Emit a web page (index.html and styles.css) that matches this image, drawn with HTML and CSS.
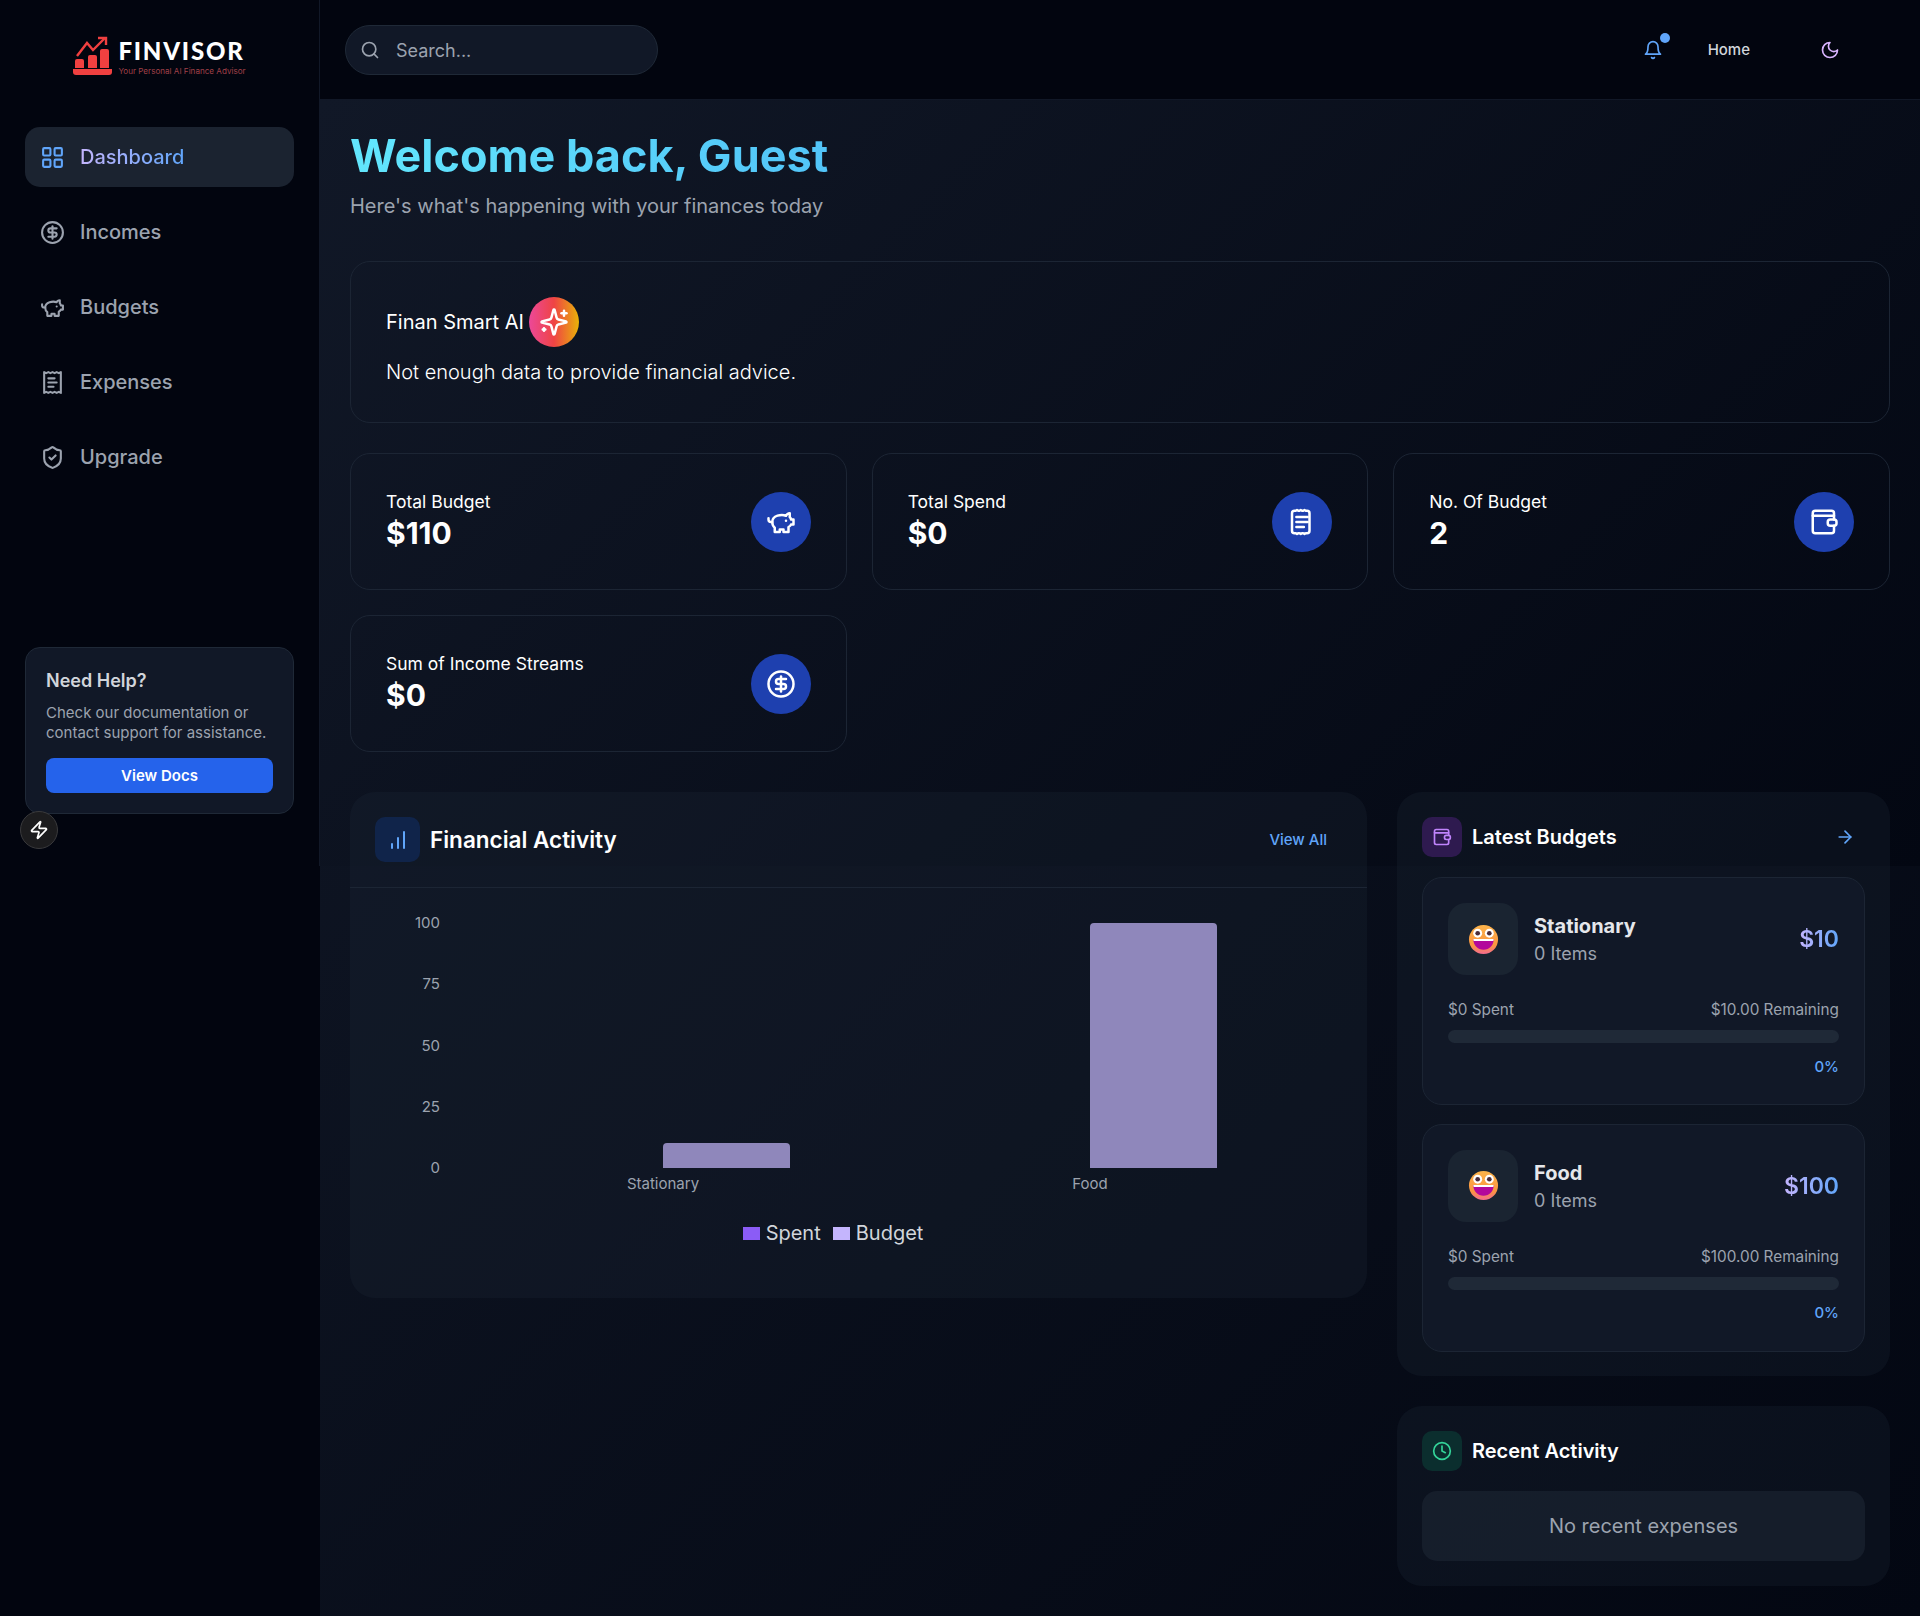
FILE: index.html
```html
<!DOCTYPE html>
<html lang="en">
<head>
    <meta charset="UTF-8">
    <meta name="viewport" content="width=device-width, initial-scale=1.0">
    <title>Finvisor Dashboard</title>
    <link rel="stylesheet" href="styles.css">
</head>
<body>
<svg class="icon-defs" width="0" height="0">
    <defs>
        <linearGradient id="emoji-face" x1="0" y1="0" x2="0" y2="1">
            <stop offset="0" stop-color="#fcb44b"/>
            <stop offset="0.7" stop-color="#fb9540"/>
            <stop offset="1" stop-color="#f46a90"/>
        </linearGradient>
        <symbol id="i-piggy" viewBox="0 0 24 24">
            <path d="M19 5c-1.5 0-2.8 1.4-3 2-3.5-1.5-11-.3-11 5 0 1.8 0 3 2 4.5V20h4v-2h3v2h4v-4c1-.5 1.7-1 2-2h2v-4h-2c0-1-.5-1.5-1-2V5z"/>
            <path d="M2 9v1c0 1.1.9 2 2 2h1"/>
            <path d="M16 11h.01"/>
        </symbol>
        <symbol id="i-receipt" viewBox="0 0 24 24">
            <path d="M4 2v20l2-1 2 1 2-1 2 1 2-1 2 1 2-1 2 1V2l-2 1-2-1-2 1-2-1-2 1-2-1-2 1Z"/>
            <path d="M14 8H8"/>
            <path d="M16 12H8"/>
            <path d="M13 16H8"/>
        </symbol>
        <symbol id="i-ticket" viewBox="0 0 24 24">
            <path d="M6 3h1l1-.6 1 .6h1l1-.6 1 .6h1l1-.6 1 .6h1a2 2 0 0 1 2 2v14a2 2 0 0 1-2 2h-1l-1 .6-1-.6h-1l-1 .6-1-.6h-1l-1 .6-1-.6H6a2 2 0 0 1-2-2V5a2 2 0 0 1 2-2Z"/>
            <path d="M7.500 8h9"/>
            <path d="M7.500 12h9"/>
            <path d="M7.500 16h6"/>
        </symbol>
        <symbol id="i-dollar" viewBox="0 0 24 24">
            <circle cx="12" cy="12" r="10"/>
            <path d="M16 8h-6a2 2 0 1 0 0 4h4a2 2 0 1 1 0 4H8"/>
            <path d="M12 18V6"/>
        </symbol>
        <symbol id="i-wallet" viewBox="0 0 24 24">
            <path d="M20 10V5a2 2 0 0 0-2-2H5a2 2 0 0 0-2 2v14a2 2 0 0 0 2 2h13a2 2 0 0 0 2-2v-4"/>
            <path d="M3 7h17"/>
            <rect x="15" y="10" width="7" height="5" rx="2"/>
        </symbol>
        <symbol id="i-emoji" viewBox="0 0 32 32">
            <circle cx="16" cy="16" r="15" fill="url(#emoji-face)"/>
            <circle cx="10" cy="9.500" r="4.600" fill="#fff"/>
            <circle cx="22" cy="9.500" r="4.600" fill="#fff"/>
            <circle cx="10" cy="9.500" r="2.400" fill="#4a2c3a"/>
            <circle cx="22" cy="9.500" r="2.400" fill="#4a2c3a"/>
            <path d="M5.500 15.500h21c0 7-4.500 11-10.500 11s-10.500-4-10.500-11z" fill="#b3079b"/>
            <path d="M5.500 15.500h21l-.4 2H5.900z" fill="#fff"/>
        </symbol>
    </defs>
</svg>

<div class="app">
    <!-- SIDEBAR -->
    <aside class="sidebar">
        <div class="brand">
            <svg class="brand-mark" viewBox="0 0 40 40">
                <path d="M2 25a2 2 0 0 1 2-2h5a2 2 0 0 1 2 2v7H2z" fill="#f04040"/>
                <path d="M15 21a2 2 0 0 1 2-2h5a2 2 0 0 1 2 2v11h-9z" fill="#f04040"/>
                <path d="M27 15a2 2 0 0 1 2-2h5a2 2 0 0 1 2 2v17h-9z" fill="#f04040"/>
                <path d="M0 33h39v3a3 3 0 0 1-3 3H3a3 3 0 0 1-3-3z" fill="#f04040"/>
                <path d="M4 20 14 7l6 7L32 2" fill="none" stroke="#f04040" stroke-width="2.400"/>
                <path d="M25 2h8v7" fill="none" stroke="#f04040" stroke-width="2.400"/>
            </svg>
            <div class="brand-text">
                <div class="brand-name">FINVISOR</div>
                <div class="brand-tag">Your Personal AI Finance Advisor</div>
            </div>
        </div>

        <nav class="side-nav">
            <a class="nav-item active">
                <svg class="icon icon-blue" viewBox="0 0 24 24"><rect x="3" y="3" width="7" height="7" rx="1"/><rect x="14" y="3" width="7" height="7" rx="1"/><rect x="14" y="14" width="7" height="7" rx="1"/><rect x="3" y="14" width="7" height="7" rx="1"/></svg>
                <span>Dashboard</span>
            </a>
            <a class="nav-item"><svg class="icon"><use href="#i-dollar"/></svg><span>Incomes</span></a>
            <a class="nav-item"><svg class="icon"><use href="#i-piggy"/></svg><span>Budgets</span></a>
            <a class="nav-item"><svg class="icon"><use href="#i-receipt"/></svg><span>Expenses</span></a>
            <a class="nav-item">
                <svg class="icon" viewBox="0 0 24 24"><path d="M20 13c0 5-3.500 7.500-7.660 8.950a1 1 0 0 1-.67-.01C7.500 20.500 4 18 4 13V6a1 1 0 0 1 1-1c2 0 4.500-1.200 6.240-2.720a1.170 1.170 0 0 1 1.520 0C14.510 3.810 17 5 19 5a1 1 0 0 1 1 1z"/><path d="m9 12 2 2 4-4"/></svg>
                <span>Upgrade</span>
            </a>
        </nav>

        <div class="help-box">
            <h4>Need Help?</h4>
            <p>Check our documentation or contact support for assistance.</p>
            <button class="help-btn">View Docs</button>
        </div>
        <div class="bolt-badge">
            <svg viewBox="0 0 24 24"><path d="M4 14a1 1 0 0 1-.78-1.630l9.900-10.200a.5.5 0 0 1 .86.46l-1.920 6.020A1 1 0 0 0 13 10h7a1 1 0 0 1 .78 1.630l-9.900 10.200a.5.5 0 0 1-.86-.46l1.920-6.020A1 1 0 0 0 11 14z"/></svg>
        </div>
    </aside>

    <div class="main-col">
        <!-- TOP BAR -->
        <header class="topbar">
            <div class="search-box">
                <svg class="icon search-icon" viewBox="0 0 24 24"><circle cx="11" cy="11" r="8"/><path d="m21 21-4.300-4.300"/></svg>
                <span class="search-text">Search...</span>
            </div>
            <div class="top-actions">
                <div class="bell">
                    <svg class="icon icon-blue" viewBox="0 0 24 24"><path d="M6 8a6 6 0 0 1 12 0c0 7 3 9 3 9H3s3-2 3-9"/><path d="M10.300 21a1.940 1.940 0 0 0 3.400 0"/></svg>
                    <i class="bell-dot"></i>
                </div>
                <a class="home-link">Home</a>
                <svg class="icon moon" viewBox="0 0 24 24"><path d="M12 3a6 6 0 0 0 9 9 9 9 0 1 1-9-9Z"/></svg>
            </div>
        </header>

        <main class="content">
            <h1 class="welcome">Welcome back, Guest</h1>
            <p class="welcome-sub">Here's what's happening with your finances today</p>

            <section class="ai-card">
                <div class="ai-head">
                    <span>Finan Smart AI</span>
                    <span class="ai-badge">
                        <svg viewBox="0 0 24 24"><path d="M9.937 15.500A2 2 0 0 0 8.500 14.063l-6.135-1.582a.5.5 0 0 1 0-.962L8.500 9.936A2 2 0 0 0 9.937 8.500l1.582-6.135a.5.5 0 0 1 .963 0L14.063 8.500A2 2 0 0 0 15.500 9.937l6.135 1.581a.5.5 0 0 1 0 .964L15.500 14.063a2 2 0 0 0-1.437 1.437l-1.582 6.135a.5.5 0 0 1-.963 0z"/><path d="M20 3v4"/><path d="M22 5h-4"/><path d="M4 17v2"/><path d="M5 18H3"/></svg>
                    </span>
                </div>
                <p>Not enough data to provide financial advice.</p>
            </section>

            <section class="stats">
                <div class="stat-card">
                    <div class="stat-text"><div class="stat-label">Total Budget</div><div class="stat-value">$110</div></div>
                    <div class="stat-icon"><svg class="icon"><use href="#i-piggy"/></svg></div>
                </div>
                <div class="stat-card">
                    <div class="stat-text"><div class="stat-label">Total Spend</div><div class="stat-value">$0</div></div>
                    <div class="stat-icon"><svg class="icon"><use href="#i-ticket"/></svg></div>
                </div>
                <div class="stat-card">
                    <div class="stat-text"><div class="stat-label">No. Of Budget</div><div class="stat-value">2</div></div>
                    <div class="stat-icon"><svg class="icon"><use href="#i-wallet"/></svg></div>
                </div>
                <div class="stat-card">
                    <div class="stat-text"><div class="stat-label">Sum of Income Streams</div><div class="stat-value">$0</div></div>
                    <div class="stat-icon"><svg class="icon"><use href="#i-dollar"/></svg></div>
                </div>
            </section>

            <section class="lower">
                <div class="panel activity">
                    <div class="activity-head">
                        <div class="panel-title">
                            <span class="title-icon tall tint-blue"><svg class="icon icon-blue" viewBox="0 0 24 24"><path d="M12 20V10"/><path d="M18 20V4"/><path d="M6 20v-4"/></svg></span>
                            <h2>Financial Activity</h2>
                        </div>
                        <a class="view-all">View All</a>
                    </div>
                    <div class="chart">
                        <div class="y-axis"><span>100</span><span>75</span><span>50</span><span>25</span><span>0</span></div>
                        <div class="plot">
                            <div class="bar bar-a"></div>
                            <div class="bar bar-b"></div>
                            <span class="x-label x-a">Stationary</span>
                            <span class="x-label x-b">Food</span>
                        </div>
                    </div>
                    <div class="legend">
                        <span class="legend-item"><i class="swatch spent"></i>Spent</span>
                        <span class="legend-item"><i class="swatch budget"></i>Budget</span>
                    </div>
                </div>

                <div class="right-col">
                    <div class="panel budgets">
                        <div class="panel-head">
                            <div class="panel-title">
                                <span class="title-icon tint-purple"><svg class="icon icon-purple"><use href="#i-wallet"/></svg></span>
                                <h3>Latest Budgets</h3>
                            </div>
                            <svg class="icon icon-blue head-arrow" viewBox="0 0 24 24"><path d="M5 12h14"/><path d="m12 5 7 7-7 7"/></svg>
                        </div>
                        <div class="budget-card">
                            <div class="budget-top">
                                <span class="emoji-box"><svg><use href="#i-emoji"/></svg></span>
                                <div class="budget-name"><h4>Stationary</h4><span>0 Items</span></div>
                                <div class="budget-amount">$10</div>
                            </div>
                            <div class="budget-row"><span>$0 Spent</span><span>$10.00 Remaining</span></div>
                            <div class="progress"></div>
                            <div class="percent">0%</div>
                        </div>
                        <div class="budget-card">
                            <div class="budget-top">
                                <span class="emoji-box"><svg><use href="#i-emoji"/></svg></span>
                                <div class="budget-name"><h4>Food</h4><span>0 Items</span></div>
                                <div class="budget-amount">$100</div>
                            </div>
                            <div class="budget-row"><span>$0 Spent</span><span>$100.00 Remaining</span></div>
                            <div class="progress"></div>
                            <div class="percent">0%</div>
                        </div>
                    </div>

                    <div class="panel recent">
                        <div class="panel-title">
                            <span class="title-icon tint-green"><svg class="icon icon-green" viewBox="0 0 24 24"><circle cx="12" cy="12" r="10"/><path d="M12 6v6l4 2"/></svg></span>
                            <h3>Recent Activity</h3>
                        </div>
                        <div class="recent-empty">No recent expenses</div>
                    </div>
                </div>
            </section>
        </main>
    </div>
</div>
</body>
</html>
```

FILE: styles.css
```css
* {
    box-sizing: border-box;
}

html, body {
    margin: 0;
    padding: 0;
}

body {
    font-family: 'Inter', sans-serif;
    color: #fff;
    background: #02050f;
}

h1, h2, h3, h4, p {
    margin: 0;
}

.icon-defs {
    position: absolute;
}

.icon {
    width: 24px;
    height: 24px;
    fill: none;
    stroke: currentColor;
    stroke-width: 2;
    stroke-linecap: round;
    stroke-linejoin: round;
    flex-shrink: 0;
}
.icon-blue { color: #60a5fa; }
.icon-purple { color: #c084fc; }
.icon-green { color: #34d399; }

.app {
    display: flex;
    align-items: stretch;
    min-height: 1616px;
}

/* sidebar */
.sidebar {
    position: relative;
    width: 320px;
    height: 866px;
    flex-shrink: 0;
    padding: 0 25px;
    border-right: 1px solid #111827;
}
.brand {
    display: flex;
    align-items: flex-start;
    justify-content: center;
    height: 127px;
    padding-top: 36px;
    gap: 5px;
}
.brand-mark {
    width: 40px;
    height: 40px;
}
.brand-name {
    font-family: 'Lato', sans-serif;
    font-weight: 900;
    font-size: 24px;
    line-height: 24px;
    letter-spacing: 1.8px;
    margin-top: 3px;
}
.brand-tag {
    margin-top: 3px;
    font-size: 8.1px;
    line-height: 10px;
    color: #a04048;
}
.side-nav {
    display: flex;
    flex-direction: column;
    gap: 15px;
}
.nav-item {
    display: flex;
    align-items: center;
    gap: 15px;
    height: 60px;
    padding-left: 15px;
    border-radius: 15px;
    color: #9ca3af;
    font-size: 20px;
    font-weight: 500;
}
.nav-item .icon {
    width: 25px;
    height: 25px;
}
.nav-item.active {
    background: #1b2330;
}
.nav-item.active span {
    background: linear-gradient(90deg, #c4b5fd, #60a5fa);
    -webkit-background-clip: text;
    background-clip: text;
    color: transparent;
}
.help-box {
    margin-top: 160px;
    height: 167px;
    padding: 21px 20px 0;
    background: #111827;
    border: 1px solid #1f2937;
    border-radius: 15px;
}
.help-box h4 {
    font-size: 18px;
    line-height: 24px;
    font-weight: 600;
    color: #d1d5db;
}
.help-box p {
    margin-top: 10px;
    font-size: 15px;
    line-height: 20px;
    color: #9ca3af;
}
.help-btn {
    display: block;
    width: 100%;
    height: 35px;
    margin-top: 15px;
    border: none;
    border-radius: 8px;
    background: #2563eb;
    color: #fff;
    font-family: inherit;
    font-size: 15px;
    font-weight: 600;
}
.bolt-badge {
    position: absolute;
    left: 20px;
    top: 811px;
    width: 38px;
    height: 38px;
    border-radius: 50%;
    background: #1c1c1e;
    border: 1px solid #3a3a3c;
    display: flex;
    align-items: center;
    justify-content: center;
}
.bolt-badge svg {
    width: 20px;
    height: 20px;
    fill: none;
    stroke: #fff;
    stroke-width: 2;
    stroke-linejoin: round;
}

/* page gradient runs full height, the content gradient stops at the screen height */
.main-col {
    flex: 1;
    background: linear-gradient(135deg, #111827 0%, #030712 100%);
}
.topbar {
    display: flex;
    align-items: center;
    justify-content: space-between;
    height: 100px;
    padding: 0 80px 0 25px;
    background: #02050f;
    border-bottom: 1px solid #111827;
}
.search-box {
    display: flex;
    align-items: center;
    gap: 16px;
    width: 313px;
    height: 50px;
    padding-left: 14px;
    border-radius: 25px;
    background: #111827;
    border: 1px solid #1f2937;
    color: #9ca3af;
    font-size: 18px;
}
.search-icon {
    width: 20px;
    height: 20px;
}
.search-text {
    margin-top: 2px;
}
.top-actions {
    display: flex;
    align-items: center;
}
.bell {
    position: relative;
    display: flex;
    margin-right: 45px;
}
.bell .icon {
    width: 20px;
    height: 20px;
}
.bell-dot {
    position: absolute;
    right: -7px;
    top: -7px;
    width: 10px;
    height: 10px;
    border-radius: 50%;
    background: #60a5fa;
}
.home-link {
    font-size: 15px;
    font-weight: 500;
    color: #d1d5db;
    margin-right: 70px;
}
.moon {
    width: 20px;
    height: 20px;
    color: #d8b4fe;
}

.content {
    height: 766px;
    padding: 26px 30px 30px;
    background: linear-gradient(135deg, #111827 0%, #030712 100%);
}
.welcome {
    font-size: 45px;
    line-height: 60px;
    font-weight: 700;
    color: transparent;
    background: linear-gradient(90deg, #62e6fd, #52c4f8);
    -webkit-background-clip: text;
    background-clip: text;
    width: max-content;
}
.welcome-sub {
    margin-top: 5px;
    font-size: 20px;
    line-height: 30px;
    color: #9ca3af;
}

.ai-card {
    height: 162px;
    margin-top: 40px;
    padding: 35px;
    border: 1px solid #1c2534;
    border-radius: 20px;
}
.ai-head {
    display: flex;
    align-items: center;
    gap: 5px;
    font-size: 20px;
}
.ai-badge {
    display: flex;
    align-items: center;
    justify-content: center;
    width: 50px;
    height: 50px;
    border-radius: 50%;
    background: linear-gradient(90deg, #ec4899, #ef4444, #eab308);
}
.ai-badge svg {
    width: 30px;
    height: 30px;
    fill: none;
    stroke: #fff;
    stroke-width: 2;
    stroke-linecap: round;
    stroke-linejoin: round;
}
.ai-card p {
    margin-top: 13px;
    font-size: 20px;
    line-height: 24px;
    font-weight: 300;
}

.stats {
    display: grid;
    grid-template-columns: repeat(3, 1fr);
    gap: 25px;
    margin-top: 30px;
}
.stat-card {
    display: flex;
    align-items: center;
    justify-content: space-between;
    height: 137px;
    padding: 0 35px;
    border: 1px solid #1c2534;
    border-radius: 20px;
}
.stat-text {
    padding-bottom: 2px;
}
.stat-label {
    margin-bottom: 1px;
    font-size: 17.5px;
    line-height: 24px;
}
.stat-value {
    font-size: 30px;
    line-height: 36px;
    font-weight: 700;
}
.stat-icon {
    display: flex;
    align-items: center;
    justify-content: center;
    width: 60px;
    height: 60px;
    border-radius: 50%;
    background: #1e40af;
}
.stat-icon .icon {
    width: 30px;
    height: 30px;
}

.lower {
    display: grid;
    grid-template-columns: 1017px 493px;
    justify-content: space-between;
    align-items: start;
    margin-top: 40px;
}
.panel {
    background: rgba(31, 41, 55, 0.27);
    border-radius: 25px;
}
.activity {
    height: 506px;
}
.activity-head {
    display: flex;
    align-items: center;
    justify-content: space-between;
    height: 96px;
    padding: 0 40px 0 25px;
    border-bottom: 1px solid #1c2534;
}
.panel-title {
    display: flex;
    align-items: center;
    gap: 10px;
}
.title-icon {
    display: flex;
    align-items: center;
    justify-content: center;
    width: 40px;
    height: 40px;
    border-radius: 10px;
}
.title-icon .icon {
    width: 20px;
    height: 20px;
}
.title-icon.tall {
    width: 45px;
    height: 45px;
}
.title-icon.tall .icon {
    width: 24px;
    height: 24px;
}
.tint-blue { background: #10244a; }
.tint-purple { background: #2e1a4f; }
.tint-green { background: #0b2e2e; }
.panel-title h2 {
    font-size: 22.5px;
    font-weight: 600;
}
.panel-title h3 {
    font-size: 20px;
    font-weight: 600;
}
.view-all {
    font-size: 15px;
    font-weight: 500;
    color: #60a5fa;
}

.chart {
    display: flex;
    padding-top: 25px;
    height: 333px;
}
.y-axis {
    width: 90px;
    height: 265px;
    display: flex;
    flex-direction: column;
    justify-content: space-between;
    text-align: right;
    font-size: 15px;
    line-height: 20px;
    color: #9ca3af;
}
.plot {
    position: relative;
    flex: 1;
}
.bar {
    position: absolute;
    width: 127px;
    background: #8f87bb;
    border-radius: 4px 4px 0 0;
}
.bar-a {
    left: 223px;
    top: 230px;
    height: 25px;
}
.bar-b {
    left: 650px;
    top: 10px;
    height: 245px;
}
.x-label {
    position: absolute;
    top: 261px;
    font-size: 15px;
    line-height: 20px;
    color: #9ca3af;
    transform: translateX(-50%);
}
.x-a { left: 223px; }
.x-b { left: 650px; }
.legend {
    display: flex;
    justify-content: center;
    gap: 12px;
    padding-right: 51px;
    font-size: 20px;
    line-height: 24px;
    color: #d1d5db;
}
.legend-item {
    display: flex;
    align-items: center;
    gap: 6px;
}
.swatch {
    width: 17px;
    height: 13px;
}
.swatch.spent { background: #8b5cf6; }
.swatch.budget { background: #c4b5fd; }

.right-col {
    display: flex;
    flex-direction: column;
    gap: 30px;
}
.budgets {
    height: 584px;
    padding: 25px;
}
.panel-head {
    display: flex;
    align-items: center;
    justify-content: space-between;
    padding-right: 10px;
    margin-bottom: 20px;
}
.head-arrow {
    width: 20px;
    height: 20px;
}
.budget-card {
    height: 228px;
    padding: 25px;
    background: #111827;
    border: 1px solid #1c2534;
    border-radius: 20px;
    margin-bottom: 18.5px;
}
.budget-top {
    display: flex;
    align-items: center;
    gap: 16px;
}
.emoji-box {
    display: flex;
    align-items: center;
    justify-content: center;
    width: 70px;
    height: 72px;
    border-radius: 18px;
    background: #1a2431;
}
.emoji-box svg {
    width: 31px;
    height: 31px;
}
.budget-name {
    margin-top: 2px;
}
.budget-name h4 {
    font-size: 20px;
    line-height: 28px;
    font-weight: 700;
    color: #e5e7eb;
}
.budget-name span {
    font-size: 18px;
    line-height: 28px;
    color: #9ca3af;
}
.budget-amount {
    margin-left: auto;
    font-size: 23px;
    font-weight: 600;
    color: transparent;
    background: linear-gradient(90deg, #c4b5fd, #60a5fa);
    -webkit-background-clip: text;
    background-clip: text;
}
.budget-row {
    display: flex;
    justify-content: space-between;
    margin-top: 25px;
    font-size: 15.3px;
    line-height: 20px;
    color: #9ca3af;
}
.progress {
    height: 13px;
    margin-top: 10px;
    border-radius: 7px;
    background: #1f2937;
}
.percent {
    margin-top: 13.5px;
    text-align: right;
    font-size: 15px;
    font-weight: 500;
    color: #60a5fa;
}

.recent {
    height: 180px;
    padding: 25px;
}
.recent-empty {
    display: flex;
    align-items: center;
    justify-content: center;
    height: 70px;
    margin-top: 20px;
    border-radius: 15px;
    background: rgba(31, 41, 55, 0.5);
    color: #9ca3af;
    font-size: 20px;
}
```
